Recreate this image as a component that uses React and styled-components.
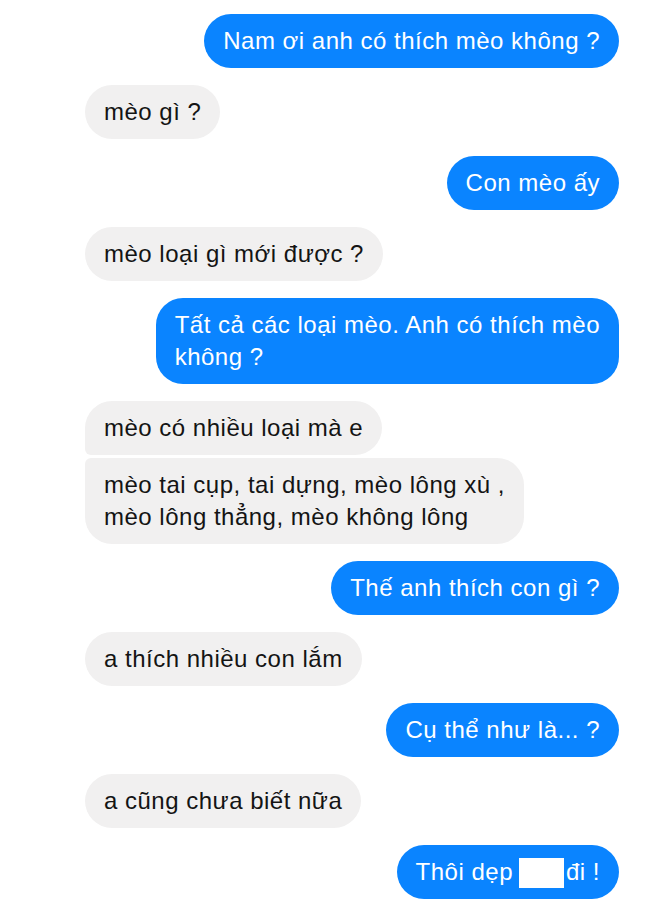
import React from "react"
import styled, { createGlobalStyle } from "styled-components"

const messages = [
  { from: "me", text: "Nam ơi anh có thích mèo không ?" },
  { from: "them", text: "mèo gì ?" },
  { from: "me", text: "Con mèo ấy" },
  { from: "them", text: "mèo loại gì mới được ?" },
  { from: "me", text: "Tất cả các loại mèo. Anh có thích mèo\nkhông ?" },
  { from: "them", text: "mèo có nhiều loại mà e", group: "first" },
  {
    from: "them",
    text: "mèo tai cụp, tai dựng, mèo lông xù ,\nmèo lông thẳng, mèo không lông",
    group: "last",
  },
  { from: "me", text: "Thế anh thích con gì ?" },
  { from: "them", text: "a thích nhiều con lắm" },
  { from: "me", text: "Cụ thể như là... ?" },
  { from: "them", text: "a cũng chưa biết nữa" },
  { from: "me", text: "Thôi dẹp", censored: true, after: "đi !" },
]

const App = () => {
  return (
    <>
      <GlobalStyle />
      <Thread>
        {messages.map((msg, index) => (
          <Bubble key={index} $mine={msg.from === "me"} $group={msg.group}>
            {msg.text}
            {msg.censored && (
              <>
                <Censor />
                {msg.after}
              </>
            )}
          </Bubble>
        ))}
      </Thread>
    </>
  )
}

export default App

const GlobalStyle = createGlobalStyle`
  body {
    margin: 0;
    background: #fff;
    font-family: "Liberation Sans", Arial, sans-serif;
  }
`

const Thread = styled.div`
  width: 650px;
  height: 918px;
  box-sizing: border-box;
  display: flex;
  flex-direction: column;
  align-items: flex-start;
  padding: 14px 31px 0 85px;
  overflow: hidden;
`

const Bubble = styled.div`
  align-self: ${(p) => (p.$mine ? "flex-end" : "flex-start")};
  white-space: pre-line;
  padding: 11px 19px;
  font-size: 24px;
  line-height: 32px;
  letter-spacing: 0.5px;
  color: ${(p) => (p.$mine ? "#fff" : "#141414")};
  background: ${(p) => (p.$mine ? "#0a84ff" : "#f1f0f0")};
  border-radius: ${(p) =>
    p.$group === "first"
      ? "27px 27px 27px 6px"
      : p.$group === "last"
      ? "6px 27px 27px 27px"
      : "27px"};
  margin-top: ${(p) => (p.$group === "last" ? "3px" : "17px")};

  &:first-child {
    margin-top: 0;
  }
`

const Censor = styled.span`
  display: inline-block;
  width: 45px;
  height: 30px;
  margin: 0 2px 0 6px;
  vertical-align: -8px;
  background: #fff;
`
